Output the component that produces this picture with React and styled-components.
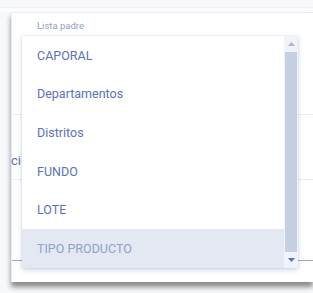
import React from "react";
import styled, { createGlobalStyle } from "styled-components";

const GlobalStyle = createGlobalStyle`
  html, body {
    margin: 0;
    padding: 0;
    background: #f7f8fb;
    font-family: Roboto, "Noto Sans", sans-serif;
    overflow: hidden;
  }
`;

const Page = styled.div`
  width: 313px;
  height: 293px;
  padding-top: 7px;
  box-sizing: border-box;
  position: relative;
`;

const TopBar = styled.div`
  height: 5px;
  background: #fcfcfe;
  border-top: 1px solid #f0f1f6;
  box-sizing: border-box;
`;

const Card = styled.div`
  margin-left: 11px;
  height: 270px;
  background: #ffffff;
  border-top: 1px solid #e8ebf3;
  border-left: 1px solid #e8ebf3;
  box-shadow: 0 5px 5px rgba(50, 50, 50, 0.55);
  box-sizing: border-box;
`;

const Label = styled.div`
  padding: 6px 0 0 25px;
  font-size: 9.5px;
  color: #8f9fc6;
  line-height: 13px;
`;

const Rule = styled.div`
  height: 1px;
  background: ${(p) => p.color || "#e9ecf3"};
  margin-top: ${(p) => p.top}px;
`;

const BackText = styled.div`
  font-size: 13px;
  color: #5a72b5;
  line-height: 16px;
  margin-top: 38px;
  margin-left: -1px;
`;

const Menu = styled.div`
  position: absolute;
  left: 22px;
  top: 36px;
  width: 276px;
  height: 232px;
  background: #ffffff;
  box-shadow: 0 2px 5px rgba(80, 100, 160, 0.25), 0 0 2px rgba(80, 100, 160, 0.15);
  display: flex;
`;

const List = styled.div`
  flex: 1;
  display: flex;
  flex-direction: column;
`;

const Item = styled.div`
  height: 38.67px;
  display: flex;
  align-items: center;
  padding-left: 15px;
  font-size: 12.5px;
  color: ${(p) => (p.active ? "#8fa1cc" : "#5a72b5")};
  background: ${(p) => (p.active ? "#e3e8f2" : "transparent")};
`;

const Scrollbar = styled.div`
  width: 14px;
  background: #f1f3f8;
  display: flex;
  flex-direction: column;
  align-items: center;
`;

const Arrow = styled.div`
  height: 16px;
  display: flex;
  align-items: center;
  justify-content: center;
  width: 100%;
`;

const Thumb = styled.div`
  flex: 1;
  width: 12px;
  background: #c5d0e3;
`;

const items = ["CAPORAL", "Departamentos", "Distritos", "FUNDO", "LOTE", "TIPO PRODUCTO"];

export default function App() {
  return (
    <>
      <GlobalStyle />
      <Page>
        <TopBar />
        <Card>
          <Label>Lista padre</Label>
          <Rule top={82} />
          <BackText>ci</BackText>
          <Rule top={10} />
          <Rule top={80} color="#9aa8cc" />
        </Card>
        <Menu>
          <List>
            {items.map((t, i) => (
              <Item key={t} active={i === items.length - 1}>
                {t}
              </Item>
            ))}
          </List>
          <Scrollbar>
            <Arrow>
              <svg width="7" height="4" viewBox="0 0 7 4">
                <path d="M0 4 L3.5 0 L7 4 Z" fill="#a9b6d6" />
              </svg>
            </Arrow>
            <Thumb />
            <Arrow>
              <svg width="7" height="4" viewBox="0 0 7 4">
                <path d="M0 0 L7 0 L3.5 4 Z" fill="#5a72b5" />
              </svg>
            </Arrow>
          </Scrollbar>
        </Menu>
      </Page>
    </>
  );
}
